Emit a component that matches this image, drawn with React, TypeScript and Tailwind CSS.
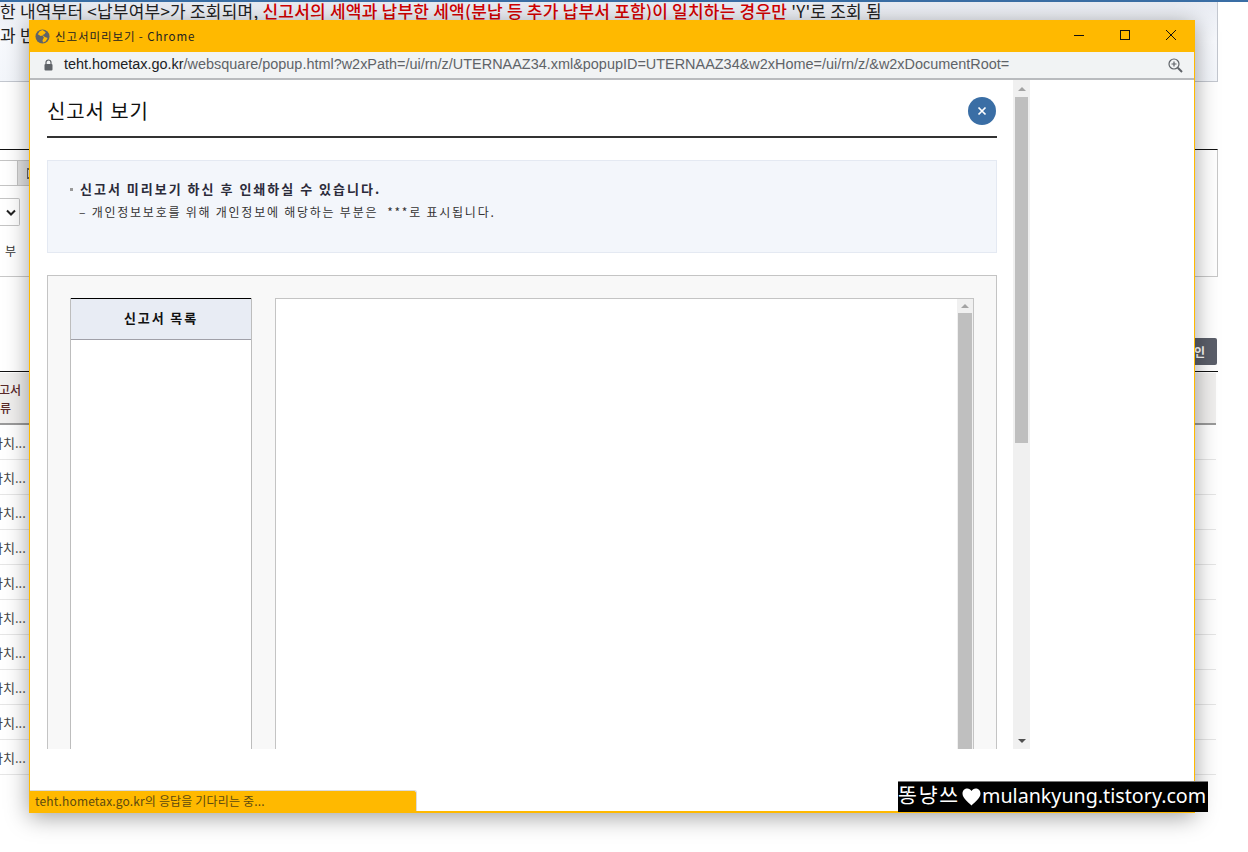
const sans = "font-['Noto_Sans','Noto_Sans_CJK_KR',sans-serif]";
const url = "font-['Liberation_Sans','Noto_Sans_CJK_KR',sans-serif]";
const kr = "font-['Noto_Sans_CJK_KR',sans-serif]";
const rows = [0, 1, 2, 3, 4, 5, 6, 7, 8, 9];

function BackgroundPage() {
  return (
    <div className="w-[1218px]">
      <div className="h-[2px] w-[1248px] bg-[#3a6ea5]" />
      <div className="h-[80px] overflow-hidden border-r border-b border-[#c3c7cf] bg-gradient-to-b from-[#e9ecf3] via-[#f7f9fd] to-[#f3f6fb] text-[17px] leading-[25px] tracking-[0.22px] text-[#222]">
        <div className="-mt-[4px] flex h-[24px] whitespace-nowrap">
          한 내역부터 &lt;납부여부&gt;가 조회되며,&nbsp;
          <span className="font-medium text-[#d40000]">신고서의 세액과 납부한 세액(분납 등 추가 납부서 포함)이 일치하는 경우만</span>
          &nbsp;'Y'로 조회 됨
        </div>
        <div className="whitespace-nowrap">과 반</div>
      </div>

      <div className="mt-[67px] h-[128px] border-t border-b border-r border-t-[#111] border-b-[#c8c8c8] border-r-[#c8c8c8] bg-white pt-[10px]">
        <div className="flex h-[26px]">
          <div className="h-[26px] w-[18px] border-y border-r border-[#c4c4c4] bg-white" />
          <div className="flex h-[26px] w-[14px] items-center justify-end border-y border-[#c4c4c4] bg-[#e2e2e2]">
            <div className="h-[11px] w-[5px] border-y-2 border-l border-[#666]" />
          </div>
        </div>
        <div className="mt-[12px] flex h-[28px] w-[20px] items-center justify-end rounded-r-[2px] border border-l-0 border-[#c4c4c4] bg-white pr-[3px]">
          <svg width="10" height="7" viewBox="0 0 10 7">
            <path d="M1 1.5 5 5.5 9 1.5" fill="none" stroke="#222" strokeWidth="2" />
          </svg>
        </div>
        <div className="mt-[16px] pl-[5px] text-[12px] leading-[18px] text-[#333]">부</div>
      </div>

      <div className="mt-[61px] flex justify-end pr-[1px]">
        <div className="flex h-[27px] w-[46px] items-center justify-center rounded-[2px] bg-[#5b5f6a] text-[12px] font-bold text-white">확인</div>
      </div>

      <div className="mt-[6px] border-t border-[#111] pt-[1px]">
        <div className="mr-[2px] flex h-[52px] flex-col justify-center border-b-2 border-[#9a9a9a] bg-[#f0efee] pt-[2px] text-[12px] leading-[18px] font-medium text-[#5a2a2a]">
          <div className="-ml-[1px]">고서</div>
          <div>류</div>
        </div>
        {rows.map((r) => (
          <div key={r} className="mr-[2px] flex h-[35px] items-center overflow-hidden border-b border-[#e6e6e6] pt-[2px] text-[13px] text-[#444]">
            <span className="-ml-[9px] whitespace-nowrap">가치...</span>
          </div>
        ))}
      </div>
    </div>
  );
}

function TitleBar() {
  return (
    <div className="flex h-[32px] items-center bg-[#ffb900]">
      <svg className="ml-[5px]" width="15" height="15" viewBox="0 0 16 16">
        <circle cx="8" cy="8" r="7.5" fill="#5f6368" />
        <path d="M8 1 5 2.5 3 5.5 6 7.5 8 7 9.5 9 8 12 8.5 14.5 11.5 13 13.5 9.5 10.5 8.500 8 6.500 10 5.500 11.500 3.500Z" fill="#ffb900" />
      </svg>
      <span className={`ml-[5px] pt-[1px] text-[11.5px] tracking-[0.9px] text-[#222] ${kr}`}>신고서미리보기 - Chrome</span>
      <div className="ml-auto flex items-center">
        <svg width="46" height="32" viewBox="0 0 46 32">
          <path d="M18 15.5H28" stroke="#111" strokeWidth="1" />
        </svg>
        <svg width="46" height="32" viewBox="0 0 46 32">
          <rect x="18.5" y="10.5" width="9" height="9" fill="none" stroke="#111" strokeWidth="1" />
        </svg>
        <svg width="46" height="32" viewBox="0 0 46 32">
          <path d="M18 10 28 20M28 10 18 20" stroke="#111" strokeWidth="1" />
        </svg>
      </div>
    </div>
  );
}

function AddressBar() {
  return (
    <div className="flex h-[28px] items-center border-b-2 border-b-[#b9bbbe] bg-[#f1f3f4]">
      <svg className="ml-[14px]" width="9" height="12" viewBox="0 0 9 12">
        <path d="M2 5V3.5a2.5 2.5 0 0 1 5 0V5" fill="none" stroke="#5f6368" strokeWidth="1.2" />
        <rect x="0.5" y="5" width="8" height="6.5" rx="1" fill="#5f6368" />
      </svg>
      <div className={`ml-[11px] text-[14.45px] whitespace-nowrap text-[#5f6368] ${url}`}>
        <span className="text-[#202124]">teht.hometax.go.kr</span>/websquare/popup.html?w2xPath=/ui/rn/z/UTERNAAZ34.xml&amp;popupID=UTERNAAZ34&amp;w2xHome=/ui/rn/z/&amp;w2xDocumentRoot=
      </div>
      <svg className="mr-[11px] ml-auto" width="15" height="15" viewBox="0 0 15 15" fill="none" stroke="#5f6368">
        <circle cx="6" cy="6" r="5" strokeWidth="1.2" />
        <path d="M6 3.5V8.5M3.500 6H8.500" strokeWidth="1.2" />
        <path d="M9.8 9.8 14 14" strokeWidth="2" />
      </svg>
    </div>
  );
}

function Scrollbar({ small }: { small?: boolean }) {
  return (
    <div className={`flex h-full flex-col items-center bg-[#f0f0f0] ${small ? "w-[16px]" : "w-[17px]"}`}>
      <div className="flex h-[17px] items-center justify-center">
        <div className="h-0 w-0 border-x-[4px] border-b-[4px] border-x-transparent border-b-[#a3a3a3]" />
      </div>
      <div className={`${small ? "h-[600px] w-[14px]" : "h-[346px] w-[13px]"} bg-[#bfbfbf]`} />
      {!small && (
        <div className="mt-auto flex h-[17px] items-center justify-center">
          <div className="h-0 w-0 border-x-[4px] border-t-[4px] border-x-transparent border-t-[#505050]" />
        </div>
      )}
    </div>
  );
}

function PopupBody() {
  return (
    <div className={`flex h-[669px] ${kr}`}>
      <div className="h-full w-[983px] overflow-hidden pl-[17px]">
        <div className="w-[950px]">
          <div className="relative flex h-[58px] items-center border-b-2 border-[#333]">
            <h1 className="pt-[6px] text-[20px] tracking-[0.9px] text-[#111]">신고서 보기</h1>
            <button className="absolute top-[17px] right-[1px] flex h-[28px] w-[28px] items-center justify-center rounded-full bg-[#3a6ea5]">
              <svg width="10" height="10" viewBox="0 0 10 10">
                <path d="M1.5 1.5 8.5 8.5M8.5 1.5 1.5 8.5" stroke="#fff" strokeWidth="1.7" />
              </svg>
            </button>
          </div>

          <div className="mt-[22px] h-[93px] border border-[#e4e9f2] bg-[#f3f6fb] pt-[19px] pl-[22px]">
            <div className="flex items-center text-[13px] leading-[18px] font-bold tracking-[2px] text-[#2b2b3a]">
              <span className="mr-[7px] h-[3px] w-[3px] bg-[#999]" />
              신고서 미리보기 하신 후 인쇄하실 수 있습니다.
            </div>
            <div className="mt-[5px] pl-[9px] text-[12px] leading-[18px] tracking-[1.76px] whitespace-pre text-[#333]">
              – 개인정보보호를 위해 개인정보에 해당하는 부분은  ***로 표시됩니다.
            </div>
          </div>

          <div className="mt-[22px] flex h-[520px] gap-[23px] border border-[#c4c4c4] bg-[#f8f8f8] pt-[22px] pl-[22px]">
            <div className="h-[520px] w-[182px] border-x border-[#bdbdbd] bg-white">
              <div className="flex h-[42px] items-center justify-center border-t border-b border-t-black border-b-[#a0a0a8] bg-[#e8ecf4] pb-[2px] text-[13px] font-bold tracking-[1.9px] text-[#111]">
                신고서 목록
              </div>
            </div>
            <div className="flex h-[520px] w-[699px] justify-end border border-[#c4c4c4] bg-white">
              <Scrollbar small />
            </div>
          </div>
        </div>
      </div>
      <Scrollbar />
    </div>
  );
}

export default function App() {
  return (
    <div className={`relative h-[852px] w-[1248px] overflow-hidden bg-white ${kr}`}>
      <BackgroundPage />

      {/* popup window */}
      <div className="absolute top-[20px] left-[29px] h-[793px] w-[1166px] border-x border-b-2 border-[#ffb900] bg-white shadow-[0_4px_22px_rgba(0,0,0,0.38)]">
        <TitleBar />
        <AddressBar />
        <PopupBody />
        <div className={`absolute bottom-0 left-0 flex h-[21px] w-[387px] items-center rounded-tr-[3px] border-t border-r border-[#dcdcdc] bg-[#ffb900] pl-[5px] text-[12px] tracking-[0.16px] text-[#5c4a10] ${kr}`}>
          teht.hometax.go.kr의 응답을 기다리는 중...
        </div>
      </div>

      {/* blog watermark */}
      <div className={`absolute top-[781px] left-[898px] flex h-[31px] w-[310px] items-center border-t border-[#777] bg-black pb-[3px] leading-none whitespace-nowrap text-white ${sans}`}>
        <span className="text-[20.5px] tracking-[1.8px]">똥냥쓰</span>
        <svg className="mt-[3px] mr-[1px] ml-[2px]" width="19" height="18" viewBox="0 0 20 19">
          <path d="M10 18.5C6 14.5 .5 10.5 .5 5.8 .5 2.600 3 .5 5.600 .5 7.500 .5 9 1.500 10 3.200 11 1.500 12.500 .5 14.400 .5 17 .5 19.500 2.600 19.500 5.800 19.500 10.500 14 14.500 10 18.500Z" fill="#fff" />
        </svg>
        <span className="text-[19.7px]">mulankyung.tistory.com</span>
      </div>
    </div>
  );
}
